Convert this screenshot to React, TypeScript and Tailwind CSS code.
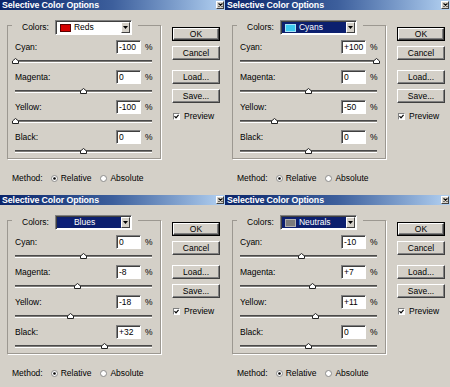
type DialogData = {
  name: string;
  swatch: string;
  swatchBorder: string;
  selected: boolean;
  values: number[];
};

const DIALOGS: DialogData[] = [
  { name: "Reds", swatch: "#d40000", swatchBorder: "#5a0000", selected: false, values: [-100, 0, -100, 0] },
  { name: "Cyans", swatch: "#3cc8ee", swatchBorder: "#a6e4f6", selected: true, values: [100, 0, -50, 0] },
  { name: "Blues", swatch: "#0c1f78", swatchBorder: "#0c1f78", selected: true, values: [0, -8, -18, 32] },
  { name: "Neutrals", swatch: "#7b7b7b", swatchBorder: "#b0b0b0", selected: true, values: [-10, 7, 11, 0] },
];

const INKS = ["Cyan:", "Magenta:", "Yellow:", "Black:"];

function fmt(v: number) {
  return v > 0 ? `+${v}` : `${v}`;
}

function TitleBar() {
  return (
    <div className="flex h-[10px] items-center bg-linear-to-r from-[#0a246a] via-[#3d5f9c] to-[#b4d2f2]">
      <span className="pl-[2px] text-[8.8px] leading-none font-bold tracking-[-0.1px] text-white">
        Selective Color Options
      </span>
      <div className="mr-[1px] ml-auto flex h-[8px] w-[8px] items-center justify-center border border-t-white border-l-white border-r-[#404040] border-b-[#404040] bg-[#d4d0c8]">
        <svg width="5" height="4" viewBox="0 0 5 4">
          <path d="M0.5 0.5 L4.5 3.5 M4.5 0.5 L0.5 3.5" stroke="#000" strokeWidth="1.1" />
        </svg>
      </div>
    </div>
  );
}

function Dropdown({ d }: { d: DialogData }) {
  return (
    <div className="flex h-[15px] w-[77px] border border-t-[#808080] border-l-[#808080] border-r-white border-b-white bg-white p-[1px] shadow-[inset_1px_1px_0_#404040]">
      <div
        className={`flex flex-1 items-center gap-[3px] pl-[3px] ${
          d.selected ? "bg-[#0c1f6e] text-white" : "bg-white text-black"
        }`}
      >
        <div
          className="h-[8px] w-[11px] border"
          style={{ background: d.swatch, borderColor: d.swatchBorder }}
        />
        <span className="leading-none">{d.name}</span>
      </div>
      <div className="flex w-[9px] items-center justify-center border border-t-white border-l-white border-r-[#404040] border-b-[#404040] bg-[#d4d0c8]">
        <svg width="5" height="3" viewBox="0 0 5 3">
          <path d="M0 0 H5 L2.5 3 Z" fill="#000" />
        </svg>
      </div>
    </div>
  );
}

function Slider({ value }: { value: number }) {
  const left = ((value + 100) / 200) * 136;
  return (
    <div className="relative h-[16px] pt-[6px]">
      <div className="h-[3px] border-t border-t-[#4a4a4a] border-b border-b-white bg-[#7e7c78]" />
      <svg
        className="absolute top-[4px]"
        style={{ left: left - 3.5 }}
        width="7"
        height="6"
        viewBox="0 0 7 6"
      >
        <path d="M0.5 5.5 V3 L3.5 0.5 L6.5 3 V5.5 Z" fill="#fff" stroke="#222" strokeWidth="1" />
      </svg>
    </div>
  );
}

function InkRow({ label, value }: { label: string; value: number }) {
  return (
    <div className="h-[30px]">
      <div className="flex h-[14px] items-center">
        <span className="flex-1">{label}</span>
        <div className="flex h-[14px] w-[25px] items-center border border-t-[#808080] border-l-[#808080] border-r-white border-b-white bg-white pl-[2px] shadow-[inset_1px_1px_0_#404040]">
          {fmt(value)}
        </div>
        <span className="ml-[4px] w-[7px]">%</span>
      </div>
      <Slider value={value} />
    </div>
  );
}

function Button({ label, isDefault }: { label: string; isDefault?: boolean }) {
  return (
    <div className={`h-[14px] w-[48px] ${isDefault ? "border border-black" : ""}`}>
      <div className="flex h-full items-center justify-center border border-t-white border-l-white border-r-[#404040] border-b-[#404040] bg-[#d4d0c8] shadow-[inset_-1px_-1px_0_#808080]">
        {label}
      </div>
    </div>
  );
}

function Radio({ checked }: { checked: boolean }) {
  return (
    <svg width="7" height="7" viewBox="0 0 7 7">
      <circle cx="3.5" cy="3.5" r="3" fill="#fff" stroke="#8a8a8a" strokeWidth="1" />
      {checked && <circle cx="3.5" cy="3.5" r="1.3" fill="#000" />}
    </svg>
  );
}

function Dialog({ d, h }: { d: DialogData; h: string }) {
  return (
    <div className={`flex flex-col overflow-hidden bg-[#d4d0c8] ${h}`}>
      <TitleBar />
      <div className="flex">
        <div className="w-[161px] shrink-0">
          <fieldset className="mt-[10px] ml-[7px] h-[139px] border border-[#9c9891] pr-[5px] pl-[4px] shadow-[1px_1px_0_#fff]">
            <legend className="h-[10px] pr-[6px] pl-[10px]">
              <div className="flex h-[15px] items-center gap-[6px]">
                <span>Colors:</span>
                <Dropdown d={d} />
              </div>
            </legend>
            <div className="px-[3px] pt-[10px]">
              {INKS.map((ink, i) => (
                <InkRow key={ink} label={ink} value={d.values[i]} />
              ))}
            </div>
          </fieldset>
          <div className="mt-[13px] flex h-[12px] items-center pl-[12px]">
            <span>Method:</span>
            <span className="ml-[8px]">
              <Radio checked />
            </span>
            <span className="ml-[3px]">Relative</span>
            <span className="ml-[9px]">
              <Radio checked={false} />
            </span>
            <span className="ml-[3px]">Absolute</span>
          </div>
        </div>
        <div className="flex flex-col pt-[17px] pl-[11px]">
          <Button label="OK" isDefault />
          <div className="mt-[5px]">
            <Button label="Cancel" />
          </div>
          <div className="mt-[10px]">
            <Button label="Load..." />
          </div>
          <div className="mt-[5px]">
            <Button label="Save..." />
          </div>
          <div className="mt-[9px] flex items-center gap-[4px] pl-[1px]">
            <div className="flex h-[7px] w-[7px] items-center justify-center border border-t-[#808080] border-l-[#808080] border-r-white border-b-white bg-white">
              <svg width="5" height="5" viewBox="0 0 5 5">
                <path d="M0.5 2.2 L2 3.8 L4.6 0.8" stroke="#000" strokeWidth="1.2" fill="none" />
              </svg>
            </div>
            <span>Preview</span>
          </div>
        </div>
      </div>
    </div>
  );
}

export default function App() {
  return (
    <div className="grid w-[450px] grid-cols-2 bg-[#d4d0c8] font-['Liberation_Sans',Arial,sans-serif] text-[8.5px] leading-none text-black">
      <Dialog d={DIALOGS[0]} h="h-[195px]" />
      <Dialog d={DIALOGS[1]} h="h-[195px]" />
      <Dialog d={DIALOGS[2]} h="h-[192px]" />
      <Dialog d={DIALOGS[3]} h="h-[192px]" />
    </div>
  );
}
